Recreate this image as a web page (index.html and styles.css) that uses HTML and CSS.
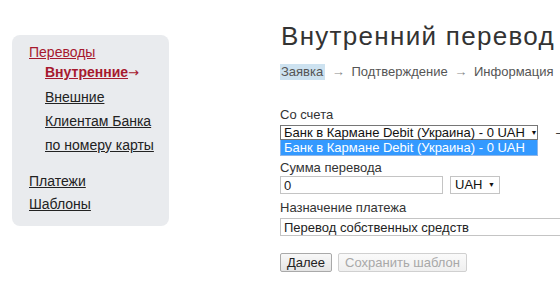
FILE: index.html
```html
<!DOCTYPE html>
<html lang="ru">
<head>
    <meta charset="UTF-8">
    <title>Внутренний перевод</title>
    <link rel="stylesheet" href="styles.css">
</head>
<body>
    <div class="page">
        <div class="sidebar">
            <ul class="menu">
                <li>
                    <a class="active" href="#">Переводы</a>
                    <ul class="submenu">
                        <li><a class="current" href="#">Внутренние</a><span class="arrow">→</span></li>
                        <li><a href="#">Внешние</a></li>
                        <li><a href="#">Клиентам Банка</a></li>
                        <li><a href="#">по номеру карты</a></li>
                    </ul>
                </li>
                <li class="group"><a href="#">Платежи</a></li>
                <li><a href="#">Шаблоны</a></li>
            </ul>
        </div>
        <div class="content">
            <h1>Внутренний перевод</h1>
            <div class="steps">
                <span class="step step-active">Заявка</span>
                <span class="step-arrow">→</span>
                <span class="step">Подтверждение</span>
                <span class="step-arrow">→</span>
                <span class="step">Информация</span>
            </div>
            <div class="form">
                <div class="label">Со счета</div>
                <div class="row">
                    <div class="select select-account">Банк в Кармане Debit (Украина) - 0 UAH <span class="caret">▼</span></div>
                    <span class="hint">–</span>
                </div>
                <div class="listbox">Банк в Кармане Debit (Украина) - 0 UAH</div>
                <div class="label label-amount">Сумма перевода</div>
                <div class="row">
                    <input class="input input-amount" type="text" value="0">
                    <div class="select select-currency">UAH <span class="caret">▼</span></div>
                </div>
                <div class="label">Назначение платежа</div>
                <input class="input input-purpose" type="text" value="Перевод собственных средств">
                <div class="buttons">
                    <button class="btn">Далее</button>
                    <button class="btn" disabled>Сохранить шаблон</button>
                </div>
            </div>
        </div>
    </div>
</body>
</html>
```

FILE: styles.css
```css
html, body {
    margin: 0;
    padding: 0;
    background: #fff;
    overflow: hidden;
}
body {
    font-family: Arial, "Liberation Sans", sans-serif;
    color: #333;
}
.page {
    display: flex;
    align-items: flex-start;
    padding-left: 12px;
}
.sidebar {
    margin-top: 35px;
    width: 157px;
    box-sizing: border-box;
    padding: 5px 0 10px 17px;
    background-color: #e9ebee;
    border-radius: 8px;
}
.menu, .submenu {
    list-style: none;
    margin: 0;
    padding: 0;
}
.menu {
    font-size: 14px;
    line-height: 24px;
}
.menu a {
    color: #222;
    text-decoration: underline;
}
.menu a.active {
    color: #a6192e;
}
.submenu {
    margin-top: -4px;
    padding-left: 16px;
}
.submenu a.current {
    color: #a6192e;
    font-weight: bold;
}
.arrow {
    color: #a6192e;
    font-family: "DejaVu Sans", sans-serif;
    font-size: 13px;
}
.menu .group {
    margin-top: 12px;
}
.menu .group + li {
    margin-top: -1px;
}
.content {
    margin-left: 111px;
    flex: 1;
    min-width: 0;
}
h1 {
    margin: 21px 0 0 1px;
    font-size: 26px;
    line-height: 30px;
    font-weight: normal;
    letter-spacing: 1.3px;
    color: #333;
    white-space: nowrap;
}
.steps {
    margin-top: 13px;
    font-size: 13px;
    line-height: 16px;
    color: #555;
    white-space: nowrap;
}
.step-active {
    display: inline-block;
    padding: 0 2px 0 1px;
    background-color: #cde2f0;
}
.step-arrow {
    color: #888;
    margin: 0 3px;
}
.form {
    margin-top: 27px;
    font-size: 13px;
}
.label {
    line-height: 16px;
    color: #333;
    margin-top: 6px;
}
.form > .label:first-child {
    margin-top: 0;
}
.label-amount {
    margin-top: 4px;
}
.row {
    display: flex;
    align-items: center;
    gap: 7px;
}
.select {
    box-sizing: border-box;
    border: 1px solid #767676;
    background: #fff;
    color: #111;
    line-height: 13px;
    padding: 0 4px 0 3px;
    white-space: nowrap;
}
.caret {
    font-size: 7px;
    vertical-align: 2px;
    margin-left: 2px;
}
.select-account {
    width: 258px;
    height: 15px;
}
.hint {
    margin-left: 11px;
    color: #333;
}
.listbox {
    box-sizing: border-box;
    width: 258px;
    height: 16px;
    line-height: 15px;
    padding-left: 3px;
    background-color: #3399ff;
    color: #fff;
    border: 1px solid #8fb6e8;
    border-top: none;
    white-space: nowrap;
}
.input {
    box-sizing: border-box;
    display: block;
    height: 18px;
    margin: 2px 0 0;
    padding: 0 3px;
    border: 1px solid #c4c4c4;
    font-family: Arial, "Liberation Sans", sans-serif;
    font-size: 13px;
    color: #222;
}
.row .input {
    margin: 0;
}
.form .row:nth-of-type(2) {
    margin-top: 2px;
}
.input-amount {
    width: 163px;
}
.select-currency {
    height: 18px;
    line-height: 16px;
    border-color: #c4c4c4;
    padding: 0 4px 0 4px;
}
.input-purpose {
    width: 300px;
}
.buttons {
    display: flex;
    gap: 6px;
    margin-top: 17px;
}
.btn {
    height: 19px;
    padding: 0 6px;
    font-family: Arial, "Liberation Sans", sans-serif;
    font-size: 13px;
    color: #222;
    background: linear-gradient(#f8f8f8, #e4e4e4);
    border: 1px solid #a9a9a9;
    border-radius: 2px;
}
.btn:disabled {
    color: #a8a8a8;
    border-color: #d0d0d0;
    background: linear-gradient(#fafafa, #efefef);
}
```
